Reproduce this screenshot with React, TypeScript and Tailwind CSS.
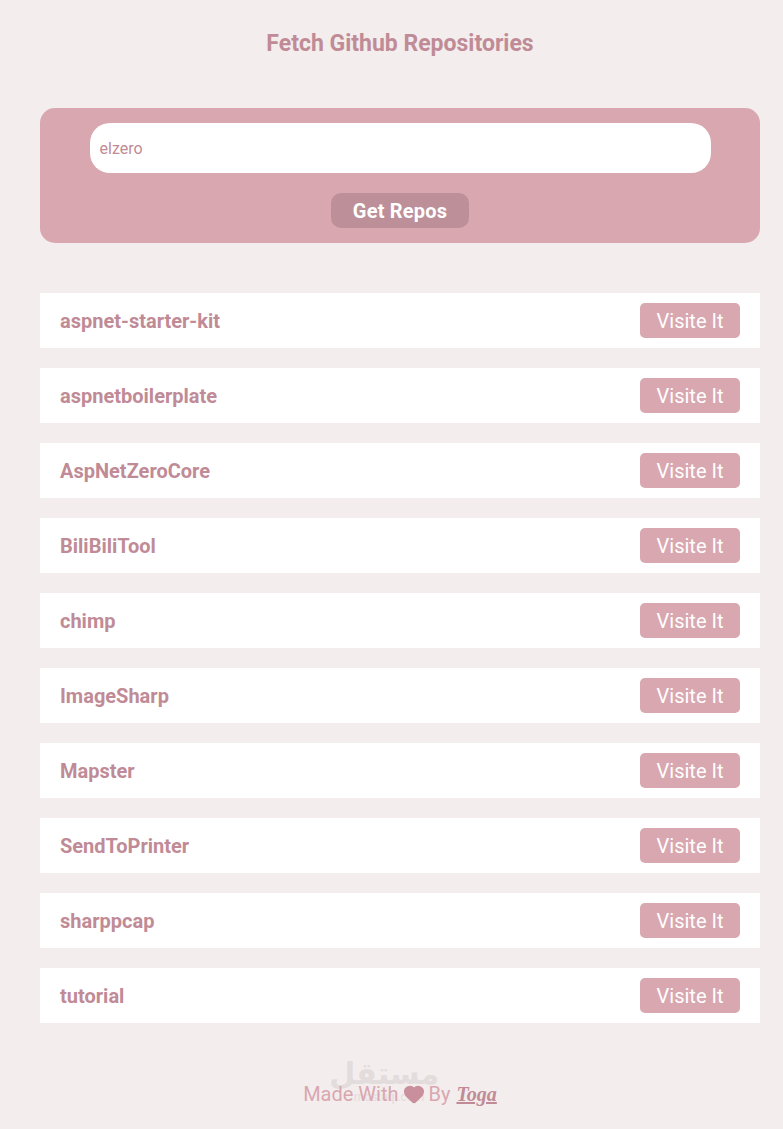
import { Heart } from "lucide-react";

const repos = [
  "aspnet-starter-kit",
  "aspnetboilerplate",
  "AspNetZeroCore",
  "BiliBiliTool",
  "chimp",
  "ImageSharp",
  "Mapster",
  "SendToPrinter",
  "sharppcap",
  "tutorial",
];

export default function App() {
  return (
    <div className="w-[783px] h-[1129px] overflow-hidden bg-[#f3eded] font-['Roboto',sans-serif]">
      <div className="w-[720px] ml-10">
        <h1 className="pt-[28px] h-[108px] text-center text-[23px] leading-[32px] font-bold text-[#c08b96]">
          Fetch Github Repositories
        </h1>

        <div className="h-[135px] rounded-[15px] bg-[#d9a7b0] pt-[15px] flex flex-col items-center">
          <input
            readOnly
            value="elzero"
            className="w-[621px] h-[50px] rounded-[20px] bg-white pl-[10px] text-base text-[#c08b96] outline-none"
          />
          <button className="mt-5 w-[138px] h-[35px] rounded-[10px] bg-[#bc8f99] text-white text-[20px] font-bold tracking-[0.2px]">
            Get Repos
          </button>
        </div>

        <div className="mt-[50px] flex flex-col gap-5">
          {repos.map((repo) => (
            <div key={repo} className="h-[55px] bg-white px-5 flex items-center justify-between">
              <span className="text-[20px] font-bold text-[#c08b96]">{repo}</span>
              <a className="w-[100px] h-[35px] rounded-[5px] bg-[#d9a7b0] text-white text-[20px] flex items-center justify-center">
                Visite It
              </a>
            </div>
          ))}
        </div>

        <div className="relative mt-[56px] h-[30px] flex items-center justify-center text-[20px] text-[#d9a7b0]">
          <div className="absolute left-[299px] top-[-25px] w-[100px] text-center text-[#e3dcdc]">
            <div className="font-['DejaVu_Sans',sans-serif] text-[30px] leading-[40px] font-bold" dir="rtl">
              مستقل
            </div>
            <div className="text-[12px] leading-[12px] mt-[-3px]">mostaql.com</div>
          </div>
          <span className="relative flex items-center">
            Made With
            <Heart className="w-[22px] h-[22px] mx-[4px] fill-[#c98f9c] text-[#c98f9c]" />
            By
            <span className="ml-[6px] font-['Liberation_Serif',serif] italic font-bold underline text-[#c08b96]">
              Toga
            </span>
          </span>
        </div>
      </div>
    </div>
  );
}
